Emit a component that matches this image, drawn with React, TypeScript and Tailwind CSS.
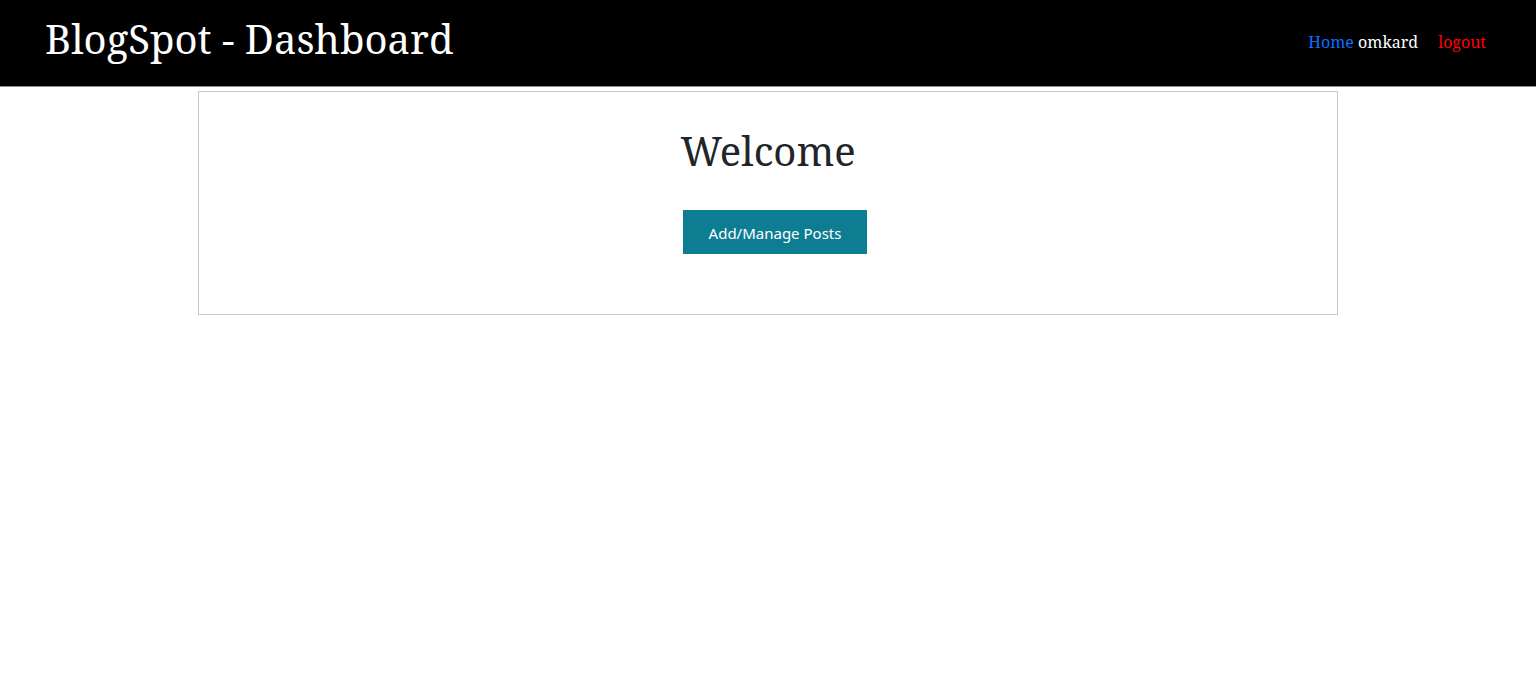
export default function App() {
  return (
    <div className="min-h-screen bg-white font-['Noto_Serif','Droid_Serif','DejaVu_Serif',serif] text-[#212529]">
      <header className="flex items-center justify-between border-b border-[#8c8c8c] bg-black pt-[15px] pr-[50px] pb-[23px] pl-[45px] text-white">
        <h1 className="text-[40px] leading-12">BlogSpot - Dashboard</h1>
        <nav className="flex items-center gap-5 pt-1.5 text-base leading-6">
          <span>
            <a href="#home" className="text-[#0d6efd]">Home</a> omkard
          </span>
          <a href="#logout" className="text-[#ff0000]">logout</a>
        </nav>
      </header>
      <main className="mx-auto mt-1 flex w-[1140px] max-w-full flex-col items-center border border-[#c8c8c8] pt-[35px] pb-15">
        <h2 className="text-[40px] leading-12">Welcome</h2>
        <button className="mt-[35px] ml-[14px] bg-[#0d7d92] px-[26px] pt-[11px] pb-[9px] font-['Noto_Sans',sans-serif] text-[15px] leading-6 text-white">
          Add/Manage Posts
        </button>
      </main>
    </div>
  );
}
